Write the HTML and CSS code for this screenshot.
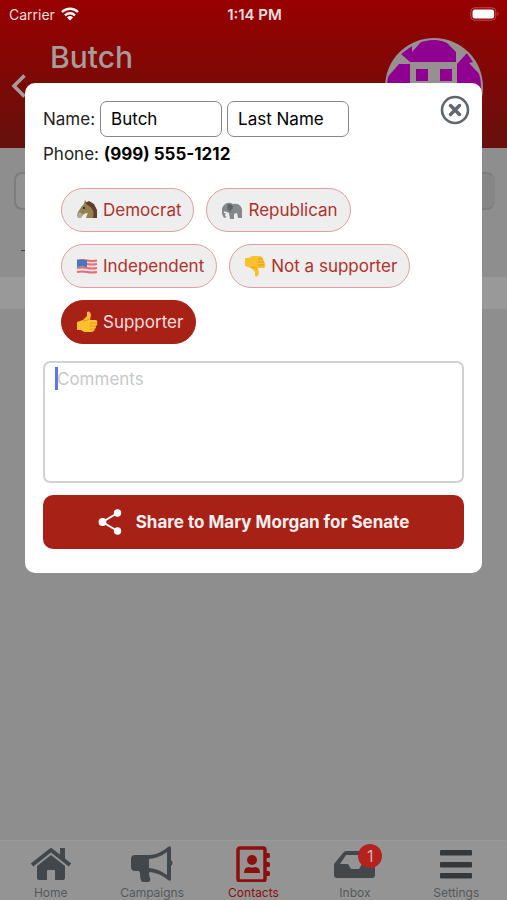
FILE: index.html
```html
<!DOCTYPE html>
<html lang="en">

<head>
    <meta charset="UTF-8">
    <meta name="viewport" content="width=device-width, initial-scale=1.0">
    <title>Contacts - Butch</title>
    <link rel="stylesheet" href="styles.css">
</head>

<body>
    <div class="status-bar">
        <div class="carrier">
            Carrier
            <svg width="18" height="14" viewBox="0 0 18 14" fill="none" stroke="#fff" stroke-width="2.4">
                <path d="M1 5a11.500 11.500 0 0 1 16 0M4 8.300a7.200 7.200 0 0 1 10 0" />
                <path d="M9 13.500l-3-3a4.400 4.400 0 0 1 6 0z" fill="#fff" stroke="none" />
            </svg>
        </div>
        <div class="time">1:14 PM</div>
        <svg class="battery" width="30" height="14" viewBox="0 0 30 14">
            <rect x=".8" y=".8" width="25" height="12.400" rx="4" fill="none" stroke="#c05050" />
            <rect x="2.500" y="2.500" width="21.600" height="9" rx="2.500" fill="#fff" />
            <path d="M27.500 4.800q2 2.200 0 4.400z" fill="#c05050" />
        </svg>
    </div>

    <header class="top">
        <a href="#" class="back" aria-label="Back">
            <svg width="15" height="24" viewBox="0 0 15 24" fill="none" stroke="#a59c9c" stroke-width="3.600">
                <path d="M13.500 1.500L3 12l10.500 10.500" />
            </svg>
        </a>
        <h1>Butch</h1>
        <svg class="avatar" width="98" height="98" viewBox="0 0 98 98">
            <defs>
                <clipPath id="round"><circle cx="49" cy="49" r="47" /></clipPath>
            </defs>
            <circle cx="49" cy="49" r="49" fill="#989090" />
            <g clip-path="url(#round)" fill="#900090">
                <path d="M25 24l-9-8 11-8v6l9-10Q50-1 62 5l9 9v10z" />
                <path d="M14 26h11v72H0V42z" />
                <path d="M72 26l10-11 6 9-4 1 16 17v56H72z" />
                <path d="M31 31h12v12H31zM55 31h12v12H55zM31 56h36v42H31z" />
            </g>
        </svg>
    </header>

    <main class="page">
        <div class="search-area">
            <div class="search-box"></div>
            <div class="dash"></div>
        </div>
        <div class="strip"></div>
    </main>

    <nav class="tabs">
        <a href="#">
            <svg width="42" height="36" viewBox="0 0 42 36" fill="#42474c">
                <path d="M7 20L21 9l14 11v12q0 2-2 2h-8v-9q0-1-1-1h-6q-1 0-1 1v9H9q-2 0-2-2z" />
                <path d="M2 19L21 4l19 15" fill="none" stroke="#42474c" stroke-width="4" stroke-linejoin="round" />
                <path d="M30 2h5v13l-5-4z" />
            </svg>
            <span>Home</span>
        </a>
        <a href="#">
            <svg width="42" height="36" viewBox="0 0 42 36" fill="#42474c">
                <path d="M4 9h15Q29 8 37 1q3-2 3 1v12q3 3 0 6v13q0 3-3 1Q29 27 19 26l-1 1q0 3 1 5 1 4-2 4h-5q-3 0-3-9l-1-2H4q-4 0-4-4v-8q0-4 4-4z" />
                <path d="M18 13Q28 12 36 6v23q-8-6-18-7z" fill="#949494" />
            </svg>
            <span>Campaigns</span>
        </a>
        <a href="#" class="active">
            <svg width="42" height="36" viewBox="0 0 42 36" fill="#8c0f0d">
                <rect x="6" y="2" width="27" height="33" rx="2" fill="none" stroke="#8c0f0d" stroke-width="3.500" />
                <rect x="33" y="7" width="5" height="5" rx="1.500" />
                <rect x="33" y="16" width="5" height="5" rx="1.500" />
                <rect x="33" y="25" width="5" height="5" rx="1.500" />
                <circle cx="20" cy="14" r="5" />
                <path d="M12 27q0-6 5-6 3 1 6 0 5 0 5 6z" />
            </svg>
            <span>Contacts</span>
        </a>
        <a href="#">
            <svg width="42" height="36" viewBox="0 0 42 36" fill="#42474c">
                <path d="M9 7q1-2 4-2h17q3 0 4 2l7 11v11q0 3-3 3H3q-3 0-3-3V18z" />
                <path d="M12 9h19l5 9h-8l-3 5H17l-3-5H6z" fill="#949494" />
            </svg>
            <span>Inbox</span>
            <b class="badge">1</b>
        </a>
        <a href="#">
            <svg width="42" height="36" viewBox="0 0 42 36" fill="#35383b">
                <rect x="5" y="4" width="32" height="5.500" rx="1" />
                <rect x="5" y="16" width="32" height="5.500" rx="1" />
                <rect x="5" y="27" width="32" height="5.500" rx="1" />
            </svg>
            <span>Settings</span>
        </a>
    </nav>

    <div class="overlay">
        <form class="modal" role="dialog" aria-label="Contact">
            <button type="button" class="close" aria-label="Close">
                <svg width="30" height="30" viewBox="0 0 30 30" fill="none" stroke="#62676d" stroke-width="2.600">
                    <circle cx="15" cy="15" r="13" />
                    <path d="M10.500 10.500l9 9M19.500 10.500l-9 9" stroke-width="3.400" stroke-linecap="round" />
                </svg>
            </button>
            <div class="name-row">
                <label for="firstName">Name:</label>
                <input type="text" id="firstName" value="Butch">
                <input type="text" id="lastName" value="Last Name" aria-label="Last name">
            </div>
            <div class="phone-row">Phone: <b>(999) 555-1212</b></div>

            <div class="tags">
                <button type="button" class="tag">
                    <svg width="22" height="22" viewBox="0 0 22 22">
                        <path d="M8 5l1-4 2 3q8 0 10 9v6H10q1-4 2-5-4 0-6 3l-3 2-2-2 1-4 4-6z" fill="#95804f" />
                        <path d="M9 4l4-2 5 3 3 6v8h-4q2-9-4-12z" fill="#5e3e2c" />
                        <path d="M1 15l3-2 3 3-2 3-3 0z" fill="#a9aa9e" />
                        <circle cx="8" cy="9" r="1" fill="#221c17" />
                    </svg>
                    Democrat
                </button>
                <button type="button" class="tag">
                    <svg width="22" height="22" viewBox="0 0 22 22">
                        <path d="M3 6q4-4 9-1 7-1 9 5v9h-4l-1-5-3 1v5H9l-1-6-3-1-1 4 2 1-3 1-2-4V9z" fill="#85878a" />
                        <path d="M7 5q5 0 5 4l-3 4-3-4z" fill="#606468" />
                        <path d="M3 13l3 1" stroke="#eee" stroke-width="1.500" />
                    </svg>
                    Republican
                </button>
                <button type="button" class="tag">
                    <svg width="22" height="22" viewBox="0 0 22 22">
                        <path d="M1 5q5-1 10 0t10 0v13q-5 1-10 0T1 18z" fill="#f5e0e0" />
                        <path d="M1 5.500q5-1 10 0t10 0M1 9q5-1 10 0t10 0M1 13q5-1 10 0t10 0M1 17q5-1 10 0t10 0" fill="none" stroke="#e17078" stroke-width="1.800" />
                        <path d="M1 5q5-1 10 0v7q-5-1-10 0z" fill="#4778b9" />
                    </svg>
                    Independent
                </button>
                <button type="button" class="tag">
                    <svg class="down" width="22" height="22" viewBox="0 0 22 22">
                        <path d="M1 11l6-2 4-4V1q3-2 4 3l-1 5h6q2 1 1 3 1 2-1 3 0 2-1 3-1 3-3 3H8l-3-2H1z" fill="#fbc02d" />
                        <path d="M14 12h6M14 15h6M14 18h5M7 10q4 0 6-2" fill="none" stroke="#e09a1c" />
                    </svg>
                    Not a supporter
                </button>
                <button type="button" class="tag selected">
                    <svg width="22" height="22" viewBox="0 0 22 22">
                        <path d="M1 11l6-2 4-4V1q3-2 4 3l-1 5h6q2 1 1 3 1 2-1 3 0 2-1 3-1 3-3 3H8l-3-2H1z" fill="#fbc02d" />
                        <path d="M14 12h6M14 15h6M14 18h5M7 10q4 0 6-2" fill="none" stroke="#e09a1c" />
                    </svg>
                    Supporter
                </button>
            </div>

            <div class="comments">
                <textarea aria-label="Comments" placeholder="Comments"></textarea>
                <i class="caret"></i>
            </div>

            <button type="button" class="share">
                <svg width="24" height="26" viewBox="0 0 24 26" fill="#fff">
                    <path d="M19.500 4L4.500 13l15 9" fill="none" stroke="#fff" stroke-width="2" />
                    <circle cx="19.500" cy="4" r="3.700" />
                    <circle cx="4.500" cy="13" r="3.900" />
                    <circle cx="19.500" cy="22" r="3.700" />
                </svg>
                Share to Mary Morgan for Senate
            </button>
        </form>
    </div>
</body>

</html>
```
FILE: styles.css
```css
* {
    box-sizing: border-box;
    padding: 0;
    margin: 0;
}

body {
    display: flex;
    flex-direction: column;
    min-height: 100vh;
    position: relative;
    background: linear-gradient(#980000, #66110c 148px, #8e8e8e 148px);
    color: #222;
    font-family: Inter, "Liberation Sans", sans-serif;
    font-size: 17px;
}

button,
input,
textarea {
    font: inherit;
}

a {
    text-decoration: none;
}

.status-bar {
    display: grid;
    grid-template-columns: 1fr auto 1fr;
    align-items: center;
    height: 28px;
    padding: 0 7px 0 9px;
    color: #f2dede;
    font-size: 14px;
}

.carrier {
    display: flex;
    align-items: center;
    gap: 6px;
}

.time {
    font-size: 15px;
    font-weight: 600;
}

.battery {
    justify-self: end;
}

.top {
    display: flex;
    height: 120px;
    padding: 10px 24px 0 11px;
}

.back {
    margin-top: 36px;
}

.top h1 {
    flex: 1;
    margin-left: 24px;
    color: #a59c9c;
    font-size: 30px;
    font-weight: 500;
    line-height: 38px;
}

.page {
    flex: 1;
}

.search-area {
    height: 129px;
    padding: 24px 12px 0 14px;
    background-color: #8e8e8e;
}

.search-box {
    height: 38px;
    border: 2px solid #7d7d7d;
    border-right-color: #868686;
    border-radius: 8px;
    background: linear-gradient(90deg, #919191 50%, #868686 50%);
}

.dash {
    width: 24px;
    height: 1px;
    margin: 40px 0 0 7px;
    background-color: #444;
}

.strip {
    height: 32px;
    background-color: #999;
}

.tabs {
    display: grid;
    grid-template-columns: repeat(5, 1fr);
    height: 60px;
    border-top: 1px solid #999;
    background-color: #949494;
}

.tabs a {
    display: flex;
    flex-direction: column;
    align-items: center;
    gap: 3px;
    padding-top: 5px;
    position: relative;
    color: #55585b;
    font-size: 12px;
    line-height: 15px;
}

.tabs .active {
    color: #8c0f0d;
}

.badge {
    position: absolute;
    top: 3px;
    left: 54px;
    width: 24px;
    height: 24px;
    border-radius: 50%;
    background-color: #b5221d;
    color: #c8b4b4;
    font-size: 16px;
    font-weight: 400;
    line-height: 24px;
    text-align: center;
}

.overlay {
    position: absolute;
    top: 83px;
    left: 25px;
    right: 25px;
}

.modal {
    padding: 18px 18px 24px;
    border-radius: 10px;
    background-color: #fff;
}

.close {
    position: absolute;
    top: 12px;
    right: 12px;
    height: 30px;
    border: 0;
    background: none;
}

.name-row {
    display: flex;
    align-items: center;
    gap: 5px;
}

.name-row input {
    width: 122px;
    height: 36px;
    padding: 0 10px;
    border: 1px solid #85888c;
    border-radius: 7px;
}

.phone-row {
    margin-top: 5px;
    line-height: 24px;
}

.phone-row b {
    color: #000;
    font-weight: 700;
}

.tags {
    display: flex;
    flex-wrap: wrap;
    gap: 12px;
    margin: 22px 0 17px;
    padding-left: 18px;
}

.tag {
    display: flex;
    align-items: center;
    gap: 5px;
    height: 44px;
    padding: 0 12px 0 14px;
    border: 1px solid #dda0a0;
    border-radius: 22px;
    background-color: #eee;
    color: #b0312a;
}

.tag.selected {
    border-color: #a72117;
    background-color: #a72117;
    color: #f8dede;
}

.down {
    transform: scaleY(-1);
}

.comments {
    position: relative;
}

textarea {
    display: block;
    width: 100%;
    height: 122px;
    padding: 6px 12px;
    border: 2px solid #d0d2d2;
    border-radius: 7px;
    line-height: 21px;
    resize: none;
}

textarea::placeholder {
    color: #c8c8c8;
}

.caret {
    position: absolute;
    top: 6px;
    left: 12px;
    width: 3px;
    height: 23px;
    background-color: #5a78e6;
}

.share {
    display: flex;
    align-items: center;
    justify-content: center;
    gap: 14px;
    width: 100%;
    height: 54px;
    margin-top: 12px;
    border: 0;
    border-radius: 10px;
    background-color: #a72117;
    color: #fff0f0;
    font-weight: 700;
}
```
